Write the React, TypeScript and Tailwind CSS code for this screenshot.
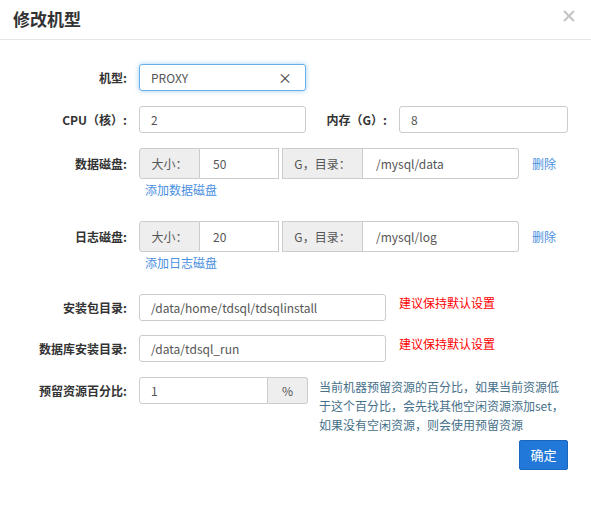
import React from 'react';

const labelCls = 'w-[127px] shrink-0 text-right text-[12px] font-bold text-[#333]';
const fieldCls = 'border border-[#ccc] bg-white px-[11px] text-[12px] text-[#555] flex items-center';
const addonCls = 'h-full border border-[#ccc] bg-[#eee] text-[12px] text-[#555] flex items-center justify-center';

function DiskRow({ label, size, dir, link }: { label: string; size: string; dir: string; link: string }) {
    return (
        <>
            <div className="flex items-center h-[31px]">
                <div className={labelCls}>{label}</div>
                <div className="ml-3 flex h-full">
                    <div className={`${addonCls} w-[61px] rounded-l-[3px]`}>大小：</div>
                    <div className={`${fieldCls} h-full w-[79px] border-l-0 px-[13px]`}>{size}</div>
                    <div className={`${addonCls} w-[81px] ml-[3px]`}>G，目录：</div>
                    <div className={`${fieldCls} h-full w-[156px] border-l-0 px-[13px] rounded-r-[3px]`}>{dir}</div>
                </div>
                <a className="ml-[13px] text-[12px] text-[#4a8fe0]">删除</a>
            </div>
            <div className="mt-[3px] ml-[145px] text-[12px] leading-[16px] text-[#4a8fe0]">{link}</div>
        </>
    );
}

export default function App() {
    return (
        <div className="w-[591px] h-[507px] bg-white font-['Noto_Sans_CJK_SC','Noto_Sans',sans-serif] overflow-hidden">
            {/* Header */}
            <div className="flex items-center justify-between h-[40px] border-b border-[#e5e5e5] pl-[13px] pr-[16px]">
                <h1 className="text-[17px] font-bold text-[#333] leading-none -mt-[3px]">修改机型</h1>
                <svg width="12" height="12" viewBox="0 0 12 12" className="-mt-[8px]">
                    <path d="M1 1L11 11M11 1L1 11" stroke="#c4c4c4" strokeWidth="2" />
                </svg>
            </div>

            {/* Body */}
            <div className="pt-[24px] pr-[23px]">
                <div className="flex items-center h-[27px]">
                    <div className={labelCls}>机型:</div>
                    <div className="ml-3 w-[167px] h-full flex items-center justify-between rounded-[3px] border border-[#66afe9] shadow-[0_0_5px_rgba(102,175,233,0.6)] px-[11px] text-[12px] text-[#555]">
                        <span>PROXY</span>
                        <span className="text-[14px] text-[#444] mr-[2px]">×</span>
                    </div>
                </div>

                <div className="flex items-center h-[27px] mt-[15px]">
                    <div className={labelCls}>CPU（核）:</div>
                    <div className={`${fieldCls} h-full ml-3 w-[167px] rounded-[3px]`}>2</div>
                    <div className="w-[81px] text-right text-[12px] font-bold text-[#333]">内存（G）:</div>
                    <div className={`${fieldCls} h-full ml-3 w-[169px] rounded-[3px]`}>8</div>
                </div>

                <div className="mt-[15px]">
                    <DiskRow label="数据磁盘:" size="50" dir="/mysql/data" link="添加数据磁盘" />
                </div>
                <div className="mt-[23px]">
                    <DiskRow label="日志磁盘:" size="20" dir="/mysql/log" link="添加日志磁盘" />
                </div>

                <div className="flex items-start mt-[23px]">
                    <div className={`${labelCls} leading-[27px]`}>安装包目录:</div>
                    <div className={`${fieldCls} ml-3 w-[247px] h-[27px] rounded-[3px]`}>/data/home/tdsql/tdsqlinstall</div>
                    <div className="ml-[13px] mt-[1px] text-[12px] leading-[16px] text-[#ff0000]">建议保持默认设置</div>
                </div>

                <div className="flex items-start mt-[14px]">
                    <div className={`${labelCls} leading-[27px]`}>数据库安装目录:</div>
                    <div className={`${fieldCls} ml-3 w-[247px] h-[27px] rounded-[3px]`}>/data/tdsql_run</div>
                    <div className="ml-[13px] mt-[1px] text-[12px] leading-[16px] text-[#ff0000]">建议保持默认设置</div>
                </div>

                <div className="flex items-start mt-[15px]">
                    <div className={`${labelCls} leading-[27px]`}>预留资源百分比:</div>
                    <div className="ml-3 flex h-[27px]">
                        <div className={`${fieldCls} h-full w-[129px] rounded-l-[3px]`}>1</div>
                        <div className={`${addonCls} w-[40px] border-l-0 rounded-r-[3px]`}>%</div>
                    </div>
                    <p className="ml-[11px] w-[249px] text-[12px] leading-[19px] text-[#46708a]">
                        当前机器预留资源的百分比，如果当前资源低于这个百分比，会先找其他空闲资源添加set，如果没有空闲资源，则会使用预留资源
                    </p>
                </div>

                <div className="flex justify-end mt-[6px]">
                    <button className="w-[49px] h-[30px] rounded-[2px] border border-[#1a65bd] bg-[#2178d9] text-[13px] text-white">确定</button>
                </div>
            </div>
        </div>
    );
}
